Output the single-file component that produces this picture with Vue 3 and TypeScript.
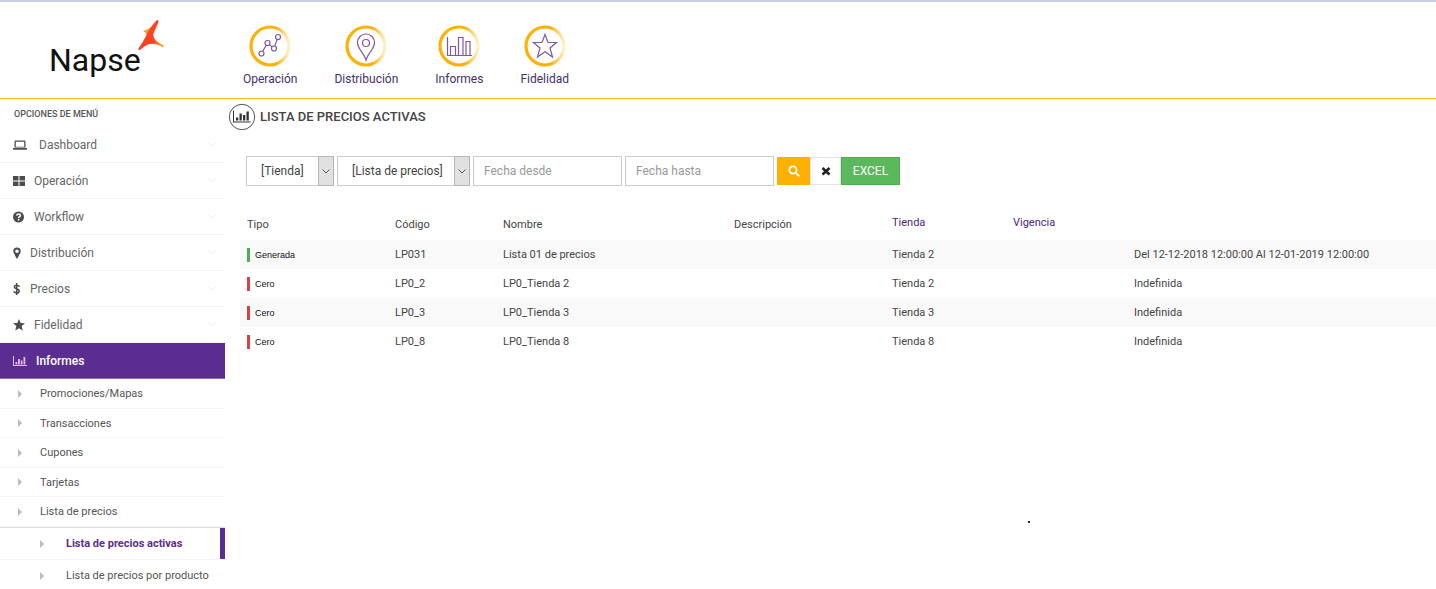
<script setup lang="ts">
import { ref } from 'vue'

interface MenuItem { label: string; icon: string; width: number; gap: string }
interface PriceRow { tipo: string; kind: string; codigo: string; nombre: string; tienda: string; vigencia: string }

const sections = [
  { label: 'Operación', icon: 'nodes' },
  { label: 'Distribución', icon: 'pin' },
  { label: 'Informes', icon: 'bars' },
  { label: 'Fidelidad', icon: 'star' },
]

const menu: MenuItem[] = [
  { label: 'Dashboard', icon: 'laptop', width: 14, gap: 'wide' },
  { label: 'Operación', icon: 'grid', width: 12, gap: 'normal' },
  { label: 'Workflow', icon: 'help', width: 12, gap: 'normal' },
  { label: 'Distribución', icon: 'marker', width: 8, gap: 'normal' },
  { label: 'Precios', icon: 'dollar', width: 8, gap: 'normal' },
  { label: 'Fidelidad', icon: 'star', width: 12, gap: 'normal' },
]

const reports = ['Promociones/Mapas', 'Transacciones', 'Cupones', 'Tarjetas', 'Lista de precios']

const rows: PriceRow[] = [
  { tipo: 'Generada', kind: 'green', codigo: 'LP031', nombre: 'Lista 01 de precios', tienda: 'Tienda 2', vigencia: 'Del 12-12-2018 12:00:00 Al 12-01-2019 12:00:00' },
  { tipo: 'Cero', kind: 'red', codigo: 'LP0_2', nombre: 'LP0_Tienda 2', tienda: 'Tienda 2', vigencia: 'Indefinida' },
  { tipo: 'Cero', kind: 'red', codigo: 'LP0_3', nombre: 'LP0_Tienda 3', tienda: 'Tienda 3', vigencia: 'Indefinida' },
  { tipo: 'Cero', kind: 'red', codigo: 'LP0_8', nombre: 'LP0_Tienda 8', tienda: 'Tienda 8', vigencia: 'Indefinida' },
]

const store = ref('[Tienda]')
const list = ref('[Lista de precios]')
const from = ref('')
const to = ref('')
</script>

<template>
  <div class="page">
    <header class="top">
      <a class="brand" href="#" aria-label="Napse">
        <span class="word">Napse</span>
        <svg class="spark" viewBox="0 0 26 32" aria-hidden="true">
          <defs>
            <linearGradient id="spark-b" x1="0" y1="0" x2="1" y2="0">
              <stop offset="0.35" stop-color="#ff4a26" />
              <stop offset="1" stop-color="#fdb022" />
            </linearGradient>
          </defs>
          <path d="M5 11.500 Q9 11.500 13 8 L11 20 Q9 14.500 5 11.500Z" fill="#fba51f" />
          <path d="M15 15.500 Q16 22 25.500 26.500 Q26.300 28 25 28.500 Q19 24 11 25 L10 18Z" fill="url(#spark-b)" />
          <path d="M18.500 1.500 Q20.500 0 20.500 3 L15.500 14.500 Q14 19 14.500 24.300 Q8 25.500 2 31 Q0 31.500 0.500 29.500 Q5 23 8 17 Q12 8 18.500 1.500Z" fill="#ff4226" />
        </svg>
      </a>
      <nav class="sections" aria-label="Secciones">
        <a v-for="s in sections" :key="s.label" class="section" href="#">
          <svg class="ring" viewBox="0 0 42 42" aria-hidden="true">
            <defs>
              <linearGradient :id="'ring-' + s.icon" x1="0" y1="0" x2="1" y2="0">
                <stop offset="0.65" stop-color="#ffb000" />
                <stop offset="1" stop-color="#ffb000" stop-opacity="0.2" />
              </linearGradient>
            </defs>
            <circle cx="21" cy="21" r="19" fill="none" stroke-width="3.200" :stroke="`url(#ring-${s.icon})`" />
            <g fill="none" stroke="#7d57aa" stroke-width="1.200">
              <template v-if="s.icon === 'nodes'">
                <circle cx="12.500" cy="28.500" r="2.500" />
                <circle cx="18.500" cy="18" r="2.500" />
                <circle cx="25" cy="23.500" r="2.500" />
                <circle cx="29" cy="12" r="2.500" />
                <path d="M13.700 26.300 17.300 20.200 M20.500 19.600 23 21.900 M25.800 21.100 28.200 14.400" />
              </template>
              <template v-else-if="s.icon === 'pin'">
                <path d="M21 35 C19 28 12.500 24 12.500 17.500 A8.500 8.500 0 0 1 29.500 17.500 C29.500 24 23 28 21 35Z" />
                <circle cx="21" cy="18" r="3.500" />
              </template>
              <template v-else-if="s.icon === 'bars'">
                <path d="M9.500 12 V30.500 H34 M12.500 30 V21.500 H17.500 V30 M20.500 30 V12.500 H25 V30 M28 30 V16.500 H32 V30" />
              </template>
              <path v-else d="M21 9.500 24 17.500 32.500 17.500 26 23 28.500 32 21 26.800 13.500 32 16 23 9.500 17.500 18 17.500Z" />
            </g>
          </svg>
          <span>{{ s.label }}</span>
        </a>
      </nav>
    </header>

    <div class="body">
      <aside class="side">
        <h2 class="caption">OPCIONES DE MENÚ</h2>
        <ul class="menu">
          <li v-for="m in menu" :key="m.label">
            <a class="entry" :class="m.gap" href="#">
              <svg :width="m.width" height="14" :viewBox="`0 0 ${m.width} 14`" fill="#4c4c4c" aria-hidden="true">
                <path v-if="m.icon === 'laptop'" fill-rule="evenodd" d="M2.500 2.500 H11.500 Q12.500 2.500 12.500 3.500 V9.500 H1.500 V3.500 Q1.500 2.500 2.500 2.500Z M2.800 3.800 V8.700 H11.200 V3.800Z M0 10 H14 V11 Q14 11.700 13 11.700 H1 Q0 11.700 0 11Z" />
                <path v-else-if="m.icon === 'grid'" d="M0 2 H5.500 V6.500 H0Z M6.500 2 H12 V6.500 H6.500Z M0 7.500 H5.500 V12 H0Z M6.500 7.500 H12 V12 H6.500Z" />
                <g v-else-if="m.icon === 'help'">
                  <circle cx="5.500" cy="7" r="5.500" />
                  <path d="M3.700 5.700 Q3.900 3.900 5.600 3.900 Q7.400 3.900 7.400 5.400 Q7.400 6.300 6.300 6.900 Q5.600 7.300 5.600 8.200 M5.600 9 V10.500" fill="none" stroke="#fff" stroke-width="1.500" />
                </g>
                <path v-else-if="m.icon === 'marker'" fill-rule="evenodd" d="M4 1.500 A3.700 3.700 0 0 1 7.700 5.200 Q7.700 6.300 7.200 7 L4.600 12.200 Q4 13 3.400 12.200 L0.800 7 Q0.300 6.300 0.300 5.200 A3.700 3.700 0 0 1 4 1.500Z M4 3.400 A1.800 1.800 0 1 0 4 7 A1.800 1.800 0 1 0 4 3.400Z" />
                <path v-else-if="m.icon === 'dollar'" d="M6.600 4.600 Q5.200 3.300 3.500 3.300 Q1.400 3.400 1.400 4.900 Q1.400 6.200 3.500 6.700 Q6.200 7.300 6.200 9.100 Q6.100 10.900 3.700 11 Q1.900 11 0.600 9.600 M3.700 1 V13" fill="none" stroke="#4c4c4c" stroke-width="1.500" />
                <path v-else d="M6 1 7.700 5 12 5.300 8.700 8.100 9.700 12.500 6 10.200 2.300 12.500 3.300 8.100 0 5.300 4.300 5Z" />
              </svg>
              <span class="name">{{ m.label }}</span>
              <svg class="chev" viewBox="0 0 8 5" aria-hidden="true"><path d="M0.500 0.500 4 4 7.500 0.500" fill="none" stroke="#ececec" /></svg>
            </a>
          </li>
          <li>
            <a class="entry current" href="#">
              <svg width="14" height="14" viewBox="0 0 14 14" fill="#e7b9f0" aria-hidden="true">
                <path d="M0 2 H1 V11 H14 V12 H0Z M2.500 8 H4.300 V10.500 H2.500Z M5 5 H6.800 V10.500 H5Z M7.700 6.500 H9.500 V10.500 H7.700Z M10.500 3 H12.300 V10.500 H10.500Z" />
              </svg>
              <span class="name">Informes</span>
            </a>
            <ul class="sub">
              <li v-for="r in reports" :key="r"><a class="report" href="#"><i class="tri"></i>{{ r }}</a></li>
            </ul>
            <ul class="leafs">
              <li><a class="leaf on" href="#"><i class="tri"></i>Lista de precios activas</a></li>
              <li><a class="leaf" href="#"><i class="tri"></i>Lista de precios por producto</a></li>
            </ul>
          </li>
        </ul>
      </aside>

      <main class="main">
        <h1 class="title">
          <svg viewBox="0 0 28 28" aria-hidden="true">
            <circle cx="14" cy="14" r="12.700" fill="#fff" stroke="#555" />
            <path d="M5 7.500 H6 V18.500 H22.500 V19.500 H5Z M8 14.500 H10.300 V17.500 H8Z M11.500 10.500 H13.800 V17.500 H11.500Z M15 12 H17.300 V17.500 H15Z M18.500 8.500 H20.800 V17.500 H18.500Z" fill="#333" />
          </svg>
          <span>LISTA DE PRECIOS ACTIVAS</span>
        </h1>

        <form class="filters" @submit.prevent>
          <span class="pick">
            <select v-model="store" class="store" aria-label="Tienda"><option>[Tienda]</option></select>
            <span class="drop"><svg viewBox="0 0 8 5" aria-hidden="true"><path d="M0.500 0.500 4 4 7.500 0.500" fill="none" stroke="#555" /></svg></span>
          </span>
          <span class="pick">
            <select v-model="list" class="list" aria-label="Lista de precios"><option>[Lista de precios]</option></select>
            <span class="drop"><svg viewBox="0 0 8 5" aria-hidden="true"><path d="M0.500 0.500 4 4 7.500 0.500" fill="none" stroke="#555" /></svg></span>
          </span>
          <input v-model="from" type="text" placeholder="Fecha desde" aria-label="Fecha desde" />
          <input v-model="to" type="text" placeholder="Fecha hasta" aria-label="Fecha hasta" />
          <div class="actions">
            <button class="search" type="submit" aria-label="Buscar">
              <svg viewBox="0 0 12 12" aria-hidden="true"><g fill="none" stroke="#fff" stroke-width="1.800"><circle cx="5" cy="5" r="3.600" /><path d="M7.700 7.700 10.800 10.800" stroke-linecap="round" /></g></svg>
            </button>
            <button class="clear" type="button" aria-label="Limpiar">
              <svg viewBox="0 0 12 12" aria-hidden="true"><path d="M2.500 3 9.500 9.500 M9.500 3 2.500 9.500" stroke="#222" stroke-width="2.600" /></svg>
            </button>
            <button class="excel" type="button">EXCEL</button>
          </div>
        </form>

        <table class="grid">
          <colgroup>
            <col class="c1" /><col class="c2" /><col class="c3" /><col class="c4" /><col class="c5" /><col class="c5" /><col />
          </colgroup>
          <thead>
            <tr>
              <th>Tipo</th><th>Código</th><th>Nombre</th><th>Descripción</th>
              <th class="sort"><a href="#">Tienda</a></th><th class="sort"><a href="#">Vigencia</a></th><th></th>
            </tr>
          </thead>
          <tbody>
            <tr v-for="r in rows" :key="r.codigo">
              <td><span class="tag" :class="r.kind">{{ r.tipo }}</span></td>
              <td>{{ r.codigo }}</td>
              <td>{{ r.nombre }}</td>
              <td></td>
              <td>{{ r.tienda }}</td>
              <td></td>
              <td>{{ r.vigencia }}</td>
            </tr>
          </tbody>
        </table>
        <i class="dot" aria-hidden="true"></i>
      </main>
    </div>
  </div>
</template>

<style>
body { background: #fff; }
</style>

<style scoped>
.page { position: relative; font-family: Roboto, "Liberation Sans", sans-serif; font-size: 12px; color: #444; border-top: 2px solid #c8cfe2; }
.page *, .page { box-sizing: border-box; }
a { color: inherit; text-decoration: none; }
ul { list-style: none; margin: 0; padding: 0; }
svg { display: block; flex: none; }

.top { display: flex; height: 97px; border-bottom: 1px solid #ffb514; }
.brand { position: relative; width: 225px; flex: none; padding: 38px 0 0 49px; color: #111; }
.word { font-size: 32px; line-height: 40px; }
.spark { position: absolute; left: 138px; top: 17px; width: 26px; height: 32px; }
.sections { display: flex; gap: 37px; padding: 23px 0 0 18px; }
.section { display: flex; flex-direction: column; align-items: center; gap: 5px; color: #43306b; line-height: 14px; }
.ring { width: 42px; height: 42px; }

.body { display: flex; }
.side { width: 225px; flex: none; color: #555; }
.caption { margin: 0; padding: 8px 14px 6px; font-size: 9px; line-height: 14px; font-weight: 500; color: #555; }
.entry { display: flex; align-items: center; height: 36px; padding: 0 9px 0 13px; border-bottom: 1px solid #f4f4f4; gap: 9px; color: #666; }
.entry.wide { gap: 12px; }
.name { flex: 1; }
.chev { width: 8px; height: 5px; }
.current { background: #5c2d91; border-color: #8d6cb2; color: #fff; font-weight: 500; }
.report, .leaf { display: flex; align-items: center; border-bottom: 1px solid #f5f5f5; font-size: 11px; }
.report { height: 30px; padding-left: 18px; gap: 18px; }
.sub li:nth-child(even) .report { height: 29px; }
.leaf { height: 32px; padding-left: 40px; gap: 22px; white-space: nowrap; }
.leafs { border-top: 1px solid #ddd; }
.leaf.on { color: #5c2d91; font-weight: 700; box-shadow: inset -5px 0 #5c2d91; }
.tri { width: 4px; height: 8px; border: solid transparent; border-width: 4px 0 4px 4px; border-left-color: #bbb; }

.main { flex: 1; min-width: 0; }
.title { display: flex; align-items: center; gap: 4px; margin: 0; padding: 4px 0 0 3px; font-size: 13px; line-height: 28px; font-weight: 500; color: #444; }
.title svg { width: 28px; height: 28px; }
.filters { display: flex; gap: 3px; padding: 25px 0 0 21px; height: 55px; }
.pick { position: relative; display: flex; }
select, input { height: 30px; margin: 0; border: 1px solid #ccc; border-radius: 0; background: #fff; font: inherit; color: #444; }
select { appearance: none; padding: 0 16px 0 14px; }
.store { width: 88px; }
.list { width: 133px; }
.drop { position: absolute; right: 0; top: 0; width: 16px; height: 30px; display: flex; align-items: center; justify-content: center; border: 1px solid #b5b5b5; background: #e1e1e1; pointer-events: none; }
.drop svg { width: 8px; height: 5px; }
input { width: 149px; padding: 0 10px; }
input::placeholder { color: #999; opacity: 1; }
.actions { display: flex; }
button { height: 28px; margin-top: 1px; padding: 0; border: 0; font: inherit; display: flex; align-items: center; justify-content: center; }
button svg { width: 12px; height: 12px; }
.search { width: 33px; background: #ffb000; }
.clear { width: 31px; background: #fff; border: 1px solid #e4e4ea; }
.excel { width: 59px; background: #5cb85c; border: 1px solid #4cae4c; color: #fff; }

.grid { width: calc(100% - 15px); margin: 22px 0 0 15px; table-layout: fixed; border-collapse: collapse; font-size: 11px; }
.c1 { width: 148px; }
.c2 { width: 108px; }
.c3 { width: 231px; }
.c4 { width: 158px; }
.c5 { width: 121px; }
th, td { padding: 0 7px; text-align: left; font-weight: 400; white-space: nowrap; }
th { height: 32px; vertical-align: middle; }
th.sort { padding-bottom: 3px; color: #4b1f7a; }
td { height: 29px; }
tbody tr:nth-child(odd) { background: #f9f9f9; }
.tag { display: block; border-left: 3px solid; padding-left: 5px; font-family: "Liberation Sans", sans-serif; font-size: 9px; line-height: 14px; color: #111; }
.green { border-color: #4cb050; }
.red { border-color: #dc4040; }
.dot { position: absolute; left: 1028px; top: 519px; width: 2px; height: 2px; background: #222; }
</style>
